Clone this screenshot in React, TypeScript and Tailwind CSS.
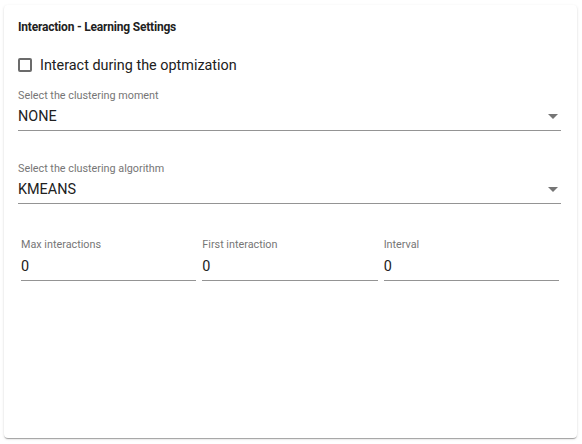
import React from "react";

const SelectField = ({ label, value }: { label: string; value: string }) => (
  <div className="w-full">
    <div className="text-[10.8px] leading-[14px] text-[#767676]">{label}</div>
    <div className="relative mt-[4px] h-[24px] border-b border-[#949494]">
      <div className="text-[14.4px] leading-[19px] text-[#212121]">{value}</div>
      <svg
        className="absolute right-[3px] top-[7px]"
        width="10"
        height="5"
        viewBox="0 0 10 5"
      >
        <path d="M0 0 L10 0 L5 5 Z" fill="#757575" />
      </svg>
    </div>
  </div>
);

const NumberField = ({ label, value }: { label: string; value: string }) => (
  <div>
    <div className="text-[10.8px] leading-[14px] text-[#767676]">{label}</div>
    <div className="mt-[5px] h-[24px] border-b border-[#949494] text-[14.4px] leading-[19px] text-[#212121]">
      {value}
    </div>
  </div>
);

export default function App() {
  return (
    <div className="min-h-[444px] bg-white pl-[4px] pt-[5px]" style={{ fontFamily: "Roboto, sans-serif" }}>
      <div className="h-[433px] w-[573px] rounded-[4px] bg-white pl-[14px] pr-[16px] pt-[15px] shadow-[0_2px_1px_-1px_rgba(0,0,0,0.2),0_1px_1px_0_rgba(0,0,0,0.14),0_1px_3px_0_rgba(0,0,0,0.12)]">
        <div className="text-[12px] font-bold leading-[14px] tracking-[-0.2px] text-[#212121]">
          Interaction - Learning Settings
        </div>

        <div className="mt-[22px] flex h-[18px] items-center">
          <div className="h-[14px] w-[14px] rounded-[2px] border-2 border-[#6b6b6b]" />
          <span className="ml-[8px] text-[14.4px] leading-[19px] text-[#212121]">
            Interact during the optmization
          </span>
        </div>

        <div className="mt-[15px]">
          <SelectField label="Select the clustering moment" value="NONE" />
        </div>

        <div className="mt-[31px]">
          <SelectField label="Select the clustering algorithm" value="KMEANS" />
        </div>

        <div className="mt-[34px] grid grid-cols-3 gap-x-[6px] pl-[3px] pr-[2px]">
          <NumberField label="Max interactions" value="0" />
          <NumberField label="First interaction" value="0" />
          <NumberField label="Interval" value="0" />
        </div>
      </div>
    </div>
  );
}
